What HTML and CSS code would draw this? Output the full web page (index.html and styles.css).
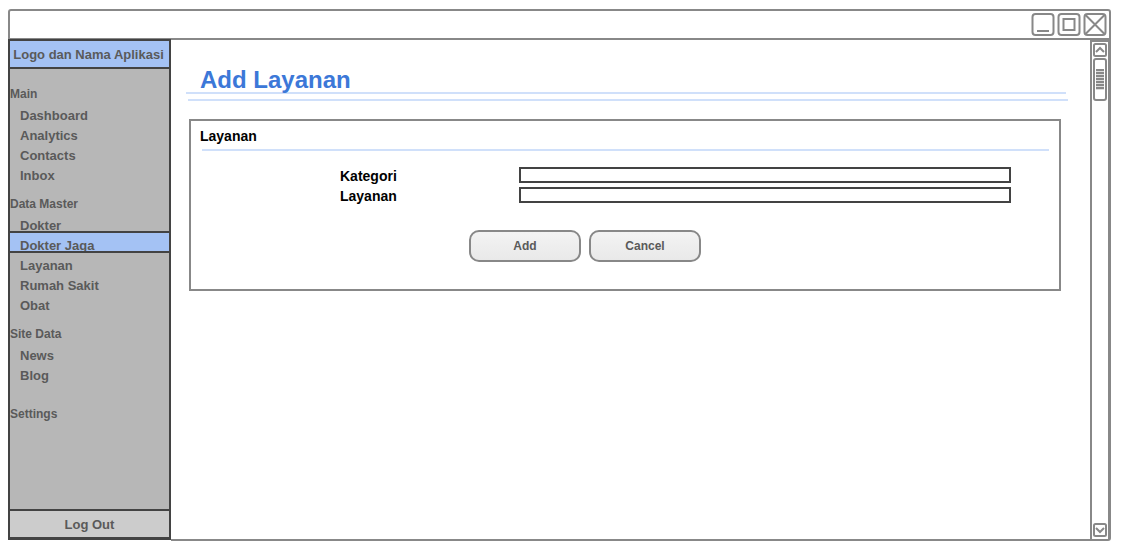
FILE: index.html
```html
<!DOCTYPE html>
<html lang="id">
<head>
<meta charset="utf-8">
<title>Add Layanan</title>
<link rel="stylesheet" href="styles.css">
</head>
<body>
<div class="window">
  <header class="titlebar">
    <button class="win-btn" type="button" aria-label="Minimize"><svg viewBox="0 0 24 24"><rect x="1.5" y="2" width="21" height="21" rx="3"/><path d="M6 19h12"/></svg></button>
    <button class="win-btn" type="button" aria-label="Maximize"><svg viewBox="0 0 24 24"><rect x="1.5" y="2" width="21" height="21" rx="3"/><rect x="6.500" y="7" width="11" height="11"/></svg></button>
    <button class="win-btn" type="button" aria-label="Close"><svg viewBox="0 0 24 24"><rect x="1.5" y="2" width="21" height="21" rx="3"/><path d="M2 2.500l20 20M22 2.500l-20 20"/></svg></button>
  </header>
  <div class="body">
    <aside class="sidebar">
      <div class="brand">Logo dan Nama Aplikasi</div>
      <nav class="nav">
        <h2 class="nav-title">Main</h2>
        <ul class="nav-list">
          <li><a class="nav-link" href="#">Dashboard</a></li>
          <li><a class="nav-link" href="#">Analytics</a></li>
          <li><a class="nav-link" href="#">Contacts</a></li>
          <li><a class="nav-link" href="#">Inbox</a></li>
        </ul>
        <h2 class="nav-title">Data Master</h2>
        <ul class="nav-list">
          <li><a class="nav-link" href="#">Dokter</a></li>
          <li><a class="nav-link active" href="#">Dokter Jaga</a></li>
          <li><a class="nav-link" href="#">Layanan</a></li>
          <li><a class="nav-link" href="#">Rumah Sakit</a></li>
          <li><a class="nav-link" href="#">Obat</a></li>
        </ul>
        <h2 class="nav-title">Site Data</h2>
        <ul class="nav-list last">
          <li><a class="nav-link" href="#">News</a></li>
          <li><a class="nav-link" href="#">Blog</a></li>
        </ul>
        <h2 class="nav-title">Settings</h2>
      </nav>
      <button class="logout" type="button">Log Out</button>
    </aside>
    <main class="main">
      <h1 class="page-title">Add Layanan</h1>
      <div class="page-rule"></div>
      <form class="panel">
        <h2 class="panel-title">Layanan</h2>
        <div class="fields">
          <label for="kategori">Kategori</label>
          <input class="field" id="kategori" type="text">
          <label for="layanan">Layanan</label>
          <input class="field" id="layanan" type="text">
        </div>
        <div class="actions">
          <button class="btn" type="button">Add</button>
          <button class="btn" type="button">Cancel</button>
        </div>
      </form>
    </main>
    <div class="scrollbar">
      <button class="scroll-btn" type="button" aria-label="Scroll up"><svg viewBox="0 0 14 14"><rect x="1" y="1" width="12" height="12" rx="1.500"/><path d="M3 9l4-4 4 4"/></svg></button>
      <div class="thumb"><div class="grip"></div></div>
      <button class="scroll-btn down" type="button" aria-label="Scroll down"><svg viewBox="0 0 14 14"><rect x="1" y="1" width="12" height="12" rx="1.500"/><path d="M3 5l4 4 4-4"/></svg></button>
    </div>
  </div>
</div>
</body>
</html>
```
FILE: styles.css
```css
* { box-sizing: border-box; }

body {
  margin: 0;
  padding: 9px 19px 19px 8px;
  background: #fff;
  color: #5a5a5a;
  font-family: "Liberation Sans", Arial, sans-serif;
  font-weight: bold;
}

button { font: inherit; color: inherit; padding: 0; }
svg { display: block; fill: none; stroke: #888; stroke-width: 2; }

.window {
  display: flex;
  flex-direction: column;
  min-height: calc(100vh - 28px);
}

.titlebar {
  display: flex;
  justify-content: flex-end;
  gap: 2px;
  padding: 1px 2px 2px;
  border: 2px solid #888;
  border-radius: 3px 3px 0 0;
}

.win-btn { width: 24px; height: 24px; border: 0; background: none; }

.body { display: flex; flex: 1; margin-top: -1px; }

.sidebar {
  display: flex;
  flex-direction: column;
  width: 163px;
  margin-bottom: 1px;
  border: 2px solid #434343;
  background: #b7b7b7;
}

.brand {
  padding: 1px 2px 0 0;
  border-bottom: 2px solid #434343;
  background: #a4c2f4;
  font-size: 13px;
  line-height: 25px;
  text-align: center;
  white-space: nowrap;
}

.nav {
  position: relative;
  z-index: 0;
  flex: 1;
  padding-top: 15px;
}

.nav-title {
  margin: 0 0 2px;
  font-size: 12px;
  line-height: 20px;
}

.nav-list { margin: 0 0 8px; padding: 0; list-style: none; font-size: 13px; }
.nav-list.last { margin-bottom: 18px; }

.nav-link {
  position: relative;
  display: block;
  padding-left: 10px;
  color: inherit;
  line-height: 20px;
  text-decoration: none;
}

.active::before,
.active::after {
  content: "";
  position: absolute;
  inset: -5px 0 3px;
}

.active::before { z-index: -1; background: #a4c2f4; }

.active::after { border: solid #434343; border-width: 2px 0; }

.logout {
  padding-top: 1px;
  border: solid #434343;
  border-width: 2px 0 1px;
  background: #ccc;
  font-size: 13px;
  line-height: 25px;
}

.main {
  flex: 1;
  min-width: 0;
  padding-top: 29px;
  border-bottom: 2px solid #888;
}

.page-title {
  margin: 0 24px 0 15px;
  padding-left: 14px;
  border-bottom: 2px solid #d0e0fa;
  color: #3c78d8;
  font-size: 24px;
  line-height: 24px;
}

.page-rule { height: 2px; margin: 5px 22px 0 17px; background: #d0e0fa; }

.panel {
  margin: 18px 29px 0 18px;
  padding: 7px 10px 27px 9px;
  border: 2px solid #888;
  color: #000;
  font-size: 14px;
}

.panel-title {
  margin: 0 0 5px;
  font-size: 14px;
  line-height: 16px;
}

.fields {
  display: grid;
  grid-template-columns: 179px 1fr;
  row-gap: 4px;
  margin-left: 2px;
  padding: 16px 38px 0 138px;
  border-top: 2px solid #d0e0fa;
  line-height: 18px;
}

.fields label { height: 16px; }

.field {
  width: 100%;
  height: 16px;
  padding: 0 4px;
  border: 2px solid #434343;
  font: inherit;
  font-size: 12px;
}

.actions { display: flex; gap: 8px; padding: 27px 0 0 269px; }

.btn {
  width: 112px;
  height: 32px;
  border: 2px solid #888;
  border-radius: 10px;
  background: linear-gradient(#f3f3f3, #e9e9e9);
  color: #5a5a5a;
  font-size: 12px;
}

.scrollbar {
  display: flex;
  flex-direction: column;
  gap: 1px;
  width: 21px;
  margin-top: 1px;
  padding: 1px 1px 2px;
  border: 2px solid #888;
  border-right-width: 3px;
  border-radius: 0 0 3px 0;
}

.scroll-btn { width: 14px; height: 14px; border: 0; background: none; }
.scroll-btn.down { margin-top: auto; }

.thumb {
  width: 14px;
  height: 43px;
  padding: 9px 1px;
  border: 2px solid #888;
  border-radius: 3px;
}

.grip {
  height: 21px;
  background: repeating-linear-gradient(#888 0 2px, #ddd 2px 3px);
}
```
